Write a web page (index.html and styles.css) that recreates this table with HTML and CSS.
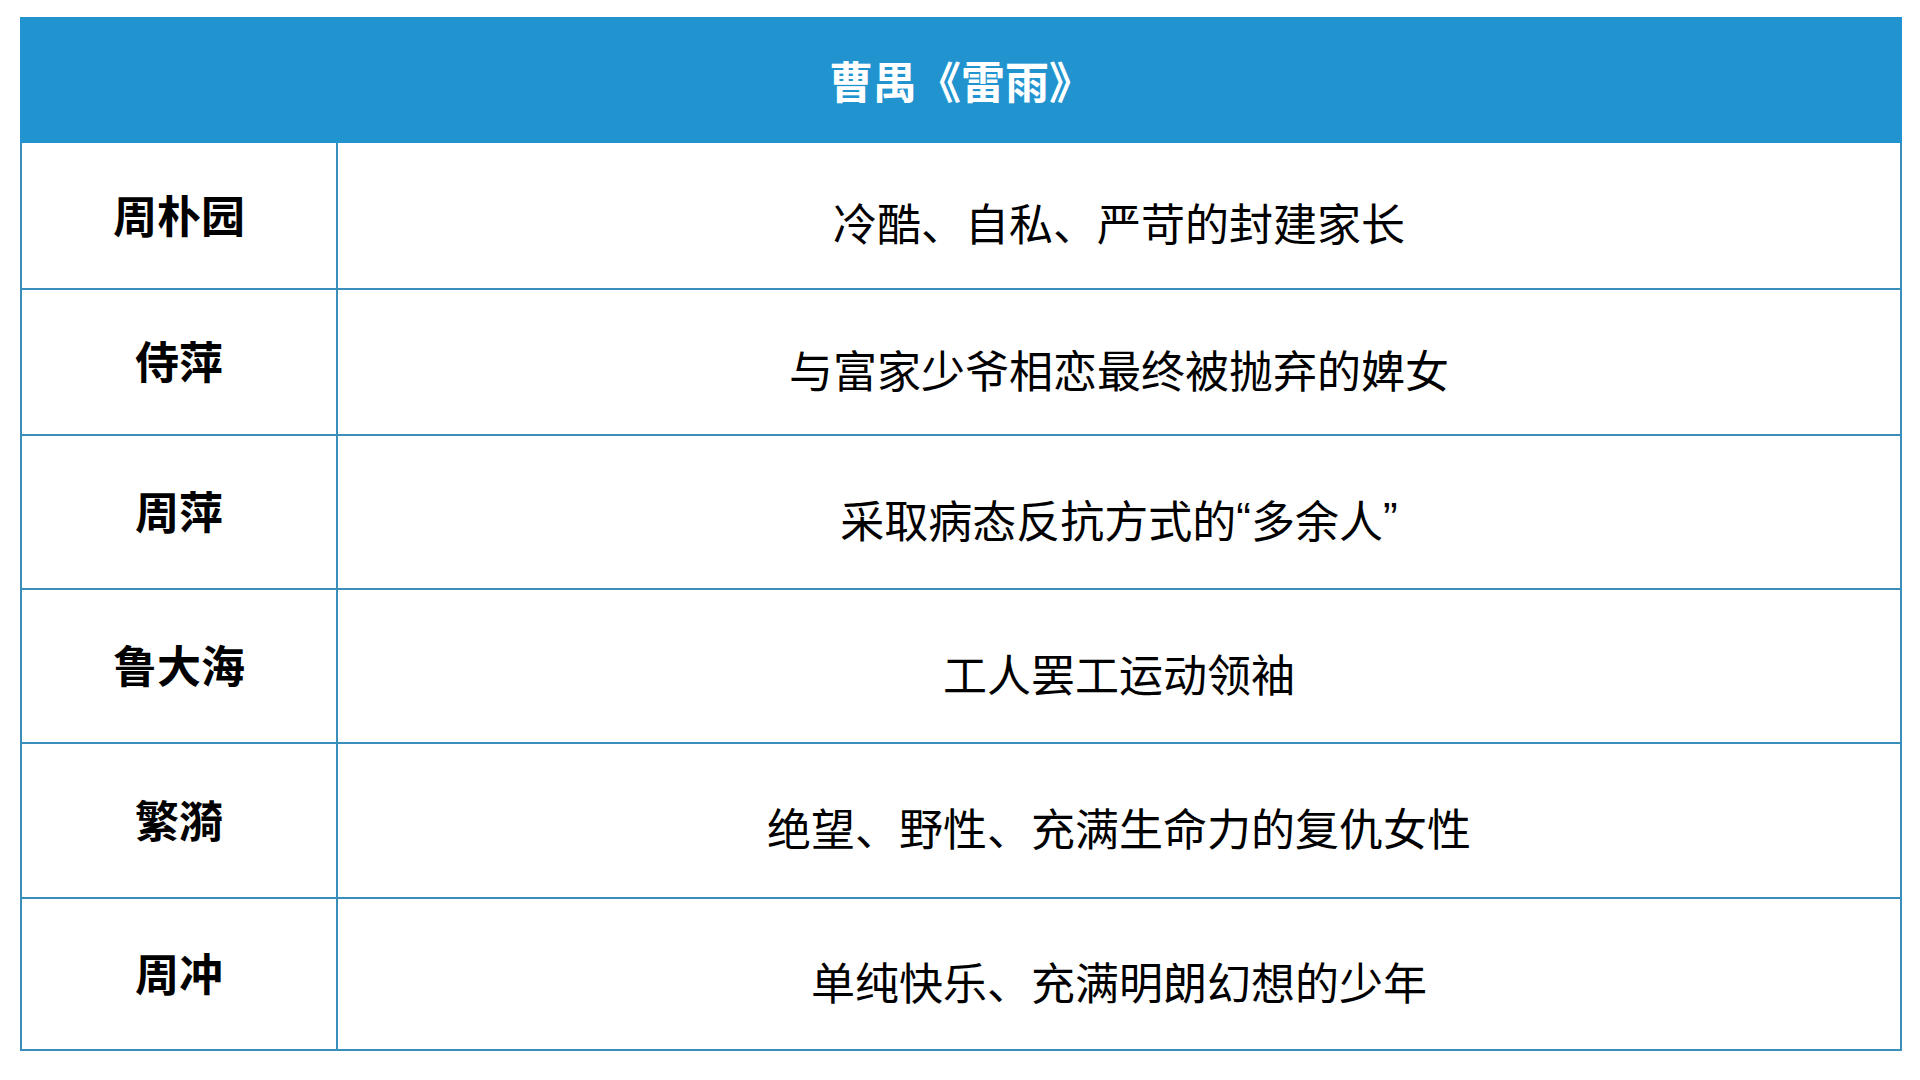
FILE: index.html
```html
<!DOCTYPE html>
<html lang="zh-CN">
<head>
<meta charset="utf-8">
<title>曹禺《雷雨》</title>
<link rel="stylesheet" href="styles.css">
</head>
<body>
<div class="sheet">
  <div class="title">曹禺《雷雨》</div>
  <div class="body">
    <div class="row r1"><div class="name">周朴园</div><div class="desc">冷酷、自私、严苛的封建家长</div></div>
    <div class="row r2"><div class="name">侍萍</div><div class="desc">与富家少爷相恋最终被抛弃的婢女</div></div>
    <div class="row r3"><div class="name">周萍</div><div class="desc">采取病态反抗方式的<span class="q">“</span>多余人<span class="q">”</span></div></div>
    <div class="row r4"><div class="name">鲁大海</div><div class="desc">工人罢工运动领袖</div></div>
    <div class="row r5"><div class="name">繁漪</div><div class="desc">绝望、野性、充满生命力的复仇女性</div></div>
    <div class="row r6"><div class="name">周冲</div><div class="desc">单纯快乐、充满明朗幻想的少年</div></div>
  </div>
</div>
</body>
</html>
```
FILE: styles.css
```css
html, body {
  margin: 0;
  padding: 0;
  background: #ffffff;
}
body {
  font-family: "Noto Sans CJK SC", "Noto Sans", sans-serif;
  color: #000;
}
.sheet {
  margin: 17px 0 0 20px;
  width: 1882px;
}
.title {
  height: 126px;
  background: #2194cf;
  color: #ffffff;
  font-weight: 700;
  font-size: 44px;
  display: flex;
  align-items: center;
  justify-content: center;
  box-sizing: border-box;
}
.body {
  border: 2px solid #3a8ebb;
  border-top: none;
  box-sizing: border-box;
}
.row {
  display: grid;
  grid-template-columns: 316px 1fr;
  box-sizing: border-box;
}
.row + .row {
  border-top: 2px solid #3a8ebb;
}
.r1 { height: 145px; }
.r2 { height: 146px; }
.r3 { height: 154px; }
.r4 { height: 154px; }
.r5 { height: 155px; }
.r6 { height: 152px; }
.name {
  border-right: 2px solid #3a8ebb;
  display: flex;
  align-items: center;
  justify-content: center;
  font-weight: 700;
  font-size: 44px;
  padding-bottom: 4px;
  box-sizing: border-box;
}
.desc {
  display: flex;
  align-items: center;
  justify-content: center;
  font-size: 44px;
  padding-top: 13px;
  box-sizing: border-box;
}
.q {
  font-family: "Liberation Sans", sans-serif;
}
```
